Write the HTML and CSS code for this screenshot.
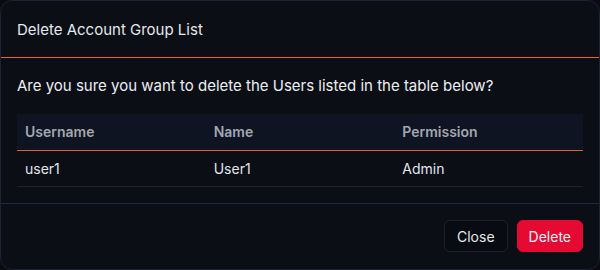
FILE: index.html
```html
<!DOCTYPE html>
<html>
<head>
<meta charset="utf-8">
<link rel="stylesheet" href="styles.css">
</head>
<body>
<div class="modal">
  <div class="modal-header">Delete Account Group List</div>
  <div class="modal-body">
    <p class="question">Are you sure you want to delete the Users listed in the table below?</p>
    <table class="list">
      <thead>
        <tr><th>Username</th><th>Name</th><th>Permission</th></tr>
      </thead>
      <tbody>
        <tr><td>user1</td><td>User1</td><td>Admin</td></tr>
      </tbody>
    </table>
  </div>
  <div class="modal-footer">
    <button class="btn btn-close">Close</button>
    <button class="btn btn-delete">Delete</button>
  </div>
</div>
</body>
</html>
```
FILE: styles.css
```css
* { box-sizing: border-box; }
html, body { margin: 0; padding: 0; background: #090b10; }
body { font-family: Inter, "Liberation Sans", sans-serif; color: #e6e8ec; }
.modal {
  width: 600px;
  height: 270px;
  background: #0b0e15;
  border: 1px solid #1c2233;
  border-radius: 12px;
  display: flex;
  flex-direction: column;
  overflow: hidden;
}
.modal-header {
  height: 57px;
  padding: 0 16px;
  display: flex;
  align-items: center;
  font-size: 15px;
  color: #e6e8ec;
  border-bottom: 1px solid #e8622c;
}
.modal-body {
  padding: 16px 16px 16px 16px;
  border-bottom: 1px solid #1e2746;
}
.question {
  margin: 0 0 16px 0;
  font-size: 15px;
  line-height: 24px;
  color: #eceef2;
}
.list {
  width: 100%;
  border-collapse: collapse;
  table-layout: fixed;
  font-size: 14px;
}
.list th {
  text-align: left;
  font-weight: 600;
  color: #a3a7b0;
  background: #0e1422;
  height: 36px;
  padding: 0 8px;
  border-bottom: 1px solid #f05a22;
}
.list td {
  height: 36px;
  padding: 0 8px;
  color: #e3e5ea;
  border-bottom: 1px solid #1f232e;
}
.modal-footer {
  flex: 1;
  display: flex;
  justify-content: flex-end;
  align-items: center;
  gap: 9px;
  padding: 0 16px;
}
.btn {
  font-family: Inter, "Liberation Sans", sans-serif;
  font-size: 14px;
  height: 32px;
  border-radius: 6px;
  padding: 0 12px;
  cursor: pointer;
}
.btn-close {
  background: #090b12;
  color: #e6e8ec;
  border: 1px solid #1d2130;
}
.btn-delete {
  background: #e60a32;
  color: #f4f4f6;
  border: 1px solid #e60a32;
  padding: 0 11px;
}
```
